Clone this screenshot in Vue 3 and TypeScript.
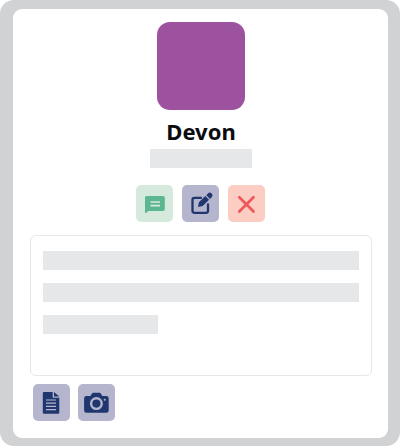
<script setup lang="ts">
interface Profile {
  name: string
}

const profile: Profile = { name: 'Devon' }
</script>

<template>
  <main class="frame">
    <section class="card">
      <div class="avatar"></div>
      <h1 class="name">{{ profile.name }}</h1>
      <div class="bar subtitle"></div>

      <div class="actions">
        <button class="action green" type="button" aria-label="Message">
          <svg viewBox="0 0 37 37" aria-hidden="true">
            <path fill="#5cb791" d="M10.500 11h16.500a1.800 1.800 0 0 1 1.800 1.800v11.400a1.800 1.800 0 0 1-1.800 1.800H12.500L10 28H9V12.500a1.500 1.500 0 0 1 1.500-1.500z" />
            <path stroke="#d5eadd" stroke-width="1.700" d="M14.500 17h9.500M14.500 20.700h9.500" />
          </svg>
        </button>
        <button class="action blue" type="button" aria-label="Edit">
          <svg viewBox="0 0 37 37" aria-hidden="true">
            <path fill="none" stroke="#20366f" stroke-width="2.300" stroke-linecap="round" d="M19 12.800h-6.500a2 2 0 0 0-2 2v11a2 2 0 0 0 2 2h11.500a2 2 0 0 0 2-2V19.500" />
            <path fill="#20366f" d="M16 22l.9-4.700 6.400-6.300 3.800 3.800-6.400 6.300zM24.300 10.200l1.700-1.700a2.500 2.500 0 0 1 3.700 3.700l-1.700 1.700z" />
          </svg>
        </button>
        <button class="action red" type="button" aria-label="Remove">
          <svg viewBox="0 0 37 37" aria-hidden="true">
            <path stroke="#f0595a" stroke-width="2.800" stroke-linecap="round" d="M11.300 12.200l14.200 14.400M25.500 12.200L11.300 26.600" />
          </svg>
        </button>
      </div>

      <div class="note">
        <div class="bar"></div>
        <div class="bar"></div>
        <div class="bar short"></div>
      </div>

      <div class="attachments">
        <button class="action blue" type="button" aria-label="Attach document">
          <svg viewBox="0 0 37 37" aria-hidden="true">
            <path fill="#20366f" d="M11 8H19.700v5.800H26.300v14.800a1.200 1.200 0 0 1-1.200 1.200H11a1.200 1.200 0 0 1-1.200-1.200V9.200A1.200 1.200 0 0 1 11 8zM21 8l5.300 4.600H21z" />
            <path stroke="#b5b5cd" stroke-width="1.200" d="M13 16h10M13 19.200h10M13 22.400h10M13 25.600h10" />
          </svg>
        </button>
        <button class="action blue" type="button" aria-label="Add photo">
          <svg viewBox="0 0 37 37" aria-hidden="true">
            <path fill="#20366f" d="M8.500 12h4l1.300-2.300a1.800 1.800 0 0 1 1.600-.9h6a1.800 1.800 0 0 1 1.600.9l1.300 2.300h4a2.400 2.400 0 0 1 2.400 2.400v12a2.400 2.400 0 0 1-2.400 2.400H8.500a2.400 2.400 0 0 1-2.400-2.400v-12A2.400 2.400 0 0 1 8.500 12z" />
            <circle cx="18.400" cy="19.600" r="5.300" fill="none" stroke="#b5b5cd" stroke-width="2.400" />
            <circle cx="26.700" cy="15.700" r="1" fill="#b5b5cd" />
          </svg>
        </button>
      </div>
    </section>
  </main>
</template>

<style>
body {
  background: #fff;
}
</style>

<style scoped>
.frame {
  box-sizing: border-box;
  display: flex;
  min-height: 100vh;
  padding: 9px 12px 8px 13px;
  border-radius: 14px;
  background: #d0d2d3;
  font-family: "Noto Sans", "Open Sans", sans-serif;
}

.card {
  flex: 1;
  display: flex;
  flex-direction: column;
  align-items: center;
  padding: 13px 16px 17px 17px;
  border-radius: 9px;
  background: #fff;
}

.avatar {
  width: 88px;
  height: 88px;
  border-radius: 13px;
  background: #9d529f;
}

.name {
  margin: 6px 0 3px;
  font-size: 22px;
  line-height: 30px;
  font-weight: 700;
  color: #0b0c10;
}

.bar {
  height: 19px;
  background: #e6e7e8;
}

.subtitle {
  width: 102px;
}

.actions,
.attachments {
  display: flex;
  gap: 8px;
}

.actions {
  gap: 9px;
  margin: 17px 1px 13px 0;
}

.attachments {
  align-self: flex-start;
  margin: 8px 0 0 3px;
}

.action {
  width: 37px;
  height: 37px;
  padding: 0;
  border: 0;
  border-radius: 5px;
  cursor: pointer;
}

.action svg {
  display: block;
  width: 100%;
  height: 100%;
}

.green {
  background: #d5eadd;
}

.blue {
  background: #b5b5cd;
}

.red {
  background: #fccdc3;
}

.note {
  box-sizing: border-box;
  align-self: stretch;
  flex: 1;
  display: flex;
  flex-direction: column;
  gap: 13px;
  padding: 15px 12px;
  border: 1px solid #e6e7e8;
  border-radius: 6px;
}

.short {
  width: 115px;
}
</style>
